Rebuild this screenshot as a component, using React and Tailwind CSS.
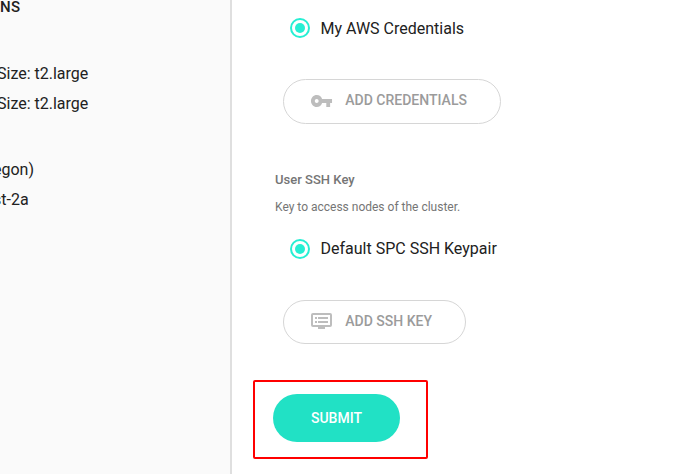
import { MdVpnKey } from "react-icons/md";

function DvrIcon() {
  return (
    <svg className="h-6 w-6 shrink-0" viewBox="0 0 24 24" fill="none">
      <rect x="2" y="5" width="19" height="12" rx="1" stroke="#bdbdbd" strokeWidth="2" />
      <path d="M5 8h2v2H5zM8 8h10v2H8zM5 12h2v2H5zM8 12h10v2H8zM8 18h7v2H8z" fill="#bdbdbd" />
    </svg>
  );
}

function Radio({ labelClassName = "", children }) {
  return (
    <label className="flex h-5 items-center text-[16px] whitespace-nowrap text-[#212121]">
      <span className="mr-[10.5px] flex h-5 w-5 shrink-0 items-center justify-center rounded-full border-2 border-[#26efd3]">
        <span className="h-2.5 w-2.5 rounded-full bg-[#26efd3]" />
      </span>
      <span className={labelClassName}>{children}</span>
    </label>
  );
}

function OutlineButton({ icon, className, children }) {
  return (
    <button className={`flex items-center rounded-full border border-[#d6d6d6] pb-[2px] pl-[26px] text-[14px] font-medium whitespace-nowrap text-[#9b9b9b] ${className}`}>
      {icon}
      <span className="ml-[11.3px]">{children}</span>
    </button>
  );
}

export default function App() {
  return (
    <div className="flex h-[474px] w-[685px] overflow-hidden bg-white font-['Roboto',sans-serif]">
      <aside className="flex w-[232px] shrink-0 flex-col border-r-2 border-[#dfdfdf] bg-[#fafafa] text-[16px] leading-[30px] text-[#212121]">
        <h2 className="mt-[-8px] h-[30px] text-[15px] font-medium tracking-[0.3px]">NS</h2>
        <div className="mt-[37px] -ml-[3px] whitespace-nowrap">
          <p>Size: t2.large</p>
          <p>Size: t2.large</p>
        </div>
        <div className="mt-9 -ml-[7px] whitespace-nowrap">
          <p>egon)</p>
          <p>st-2a</p>
        </div>
      </aside>
      <main className="flex flex-1 flex-col items-start">
        <div className="mt-[18px] ml-[58px]">
          <Radio labelClassName="pt-[2px]">My AWS Credentials</Radio>
        </div>
        <OutlineButton className="mt-[41px] ml-[51px] h-[45px] w-[218px]" icon={<MdVpnKey preserveAspectRatio="none" className="mt-px mr-px h-6 w-[23px] shrink-0 text-[#bdbdbd]" />}>
          ADD CREDENTIALS
        </OutlineButton>
        <h3 className="mt-[46px] ml-[43px] h-5 text-[13px] leading-5 font-medium tracking-[0.02px] text-[#757575]">User SSH Key</h3>
        <p className="mt-[7px] ml-[43px] h-5 text-[12px] leading-5 text-[#757575]">Key to access nodes of the cluster.</p>
        <div className="mt-[22px] ml-[58px]">
          <Radio>Default SPC SSH Keypair</Radio>
        </div>
        <OutlineButton className="mt-[41px] ml-[51px] h-[44px] w-[183px]" icon={<DvrIcon />}>
          ADD SSH KEY
        </OutlineButton>
        <div className="mt-[36px] ml-[21px] h-[79px] w-[175px] rounded-[2px] border-2 border-[#ff0000] pt-3 pl-[18px]">
          <button className="h-12 w-[127px] rounded-full bg-[#21e1c5] text-[14px] font-medium text-white">SUBMIT</button>
        </div>
      </main>
    </div>
  );
}
